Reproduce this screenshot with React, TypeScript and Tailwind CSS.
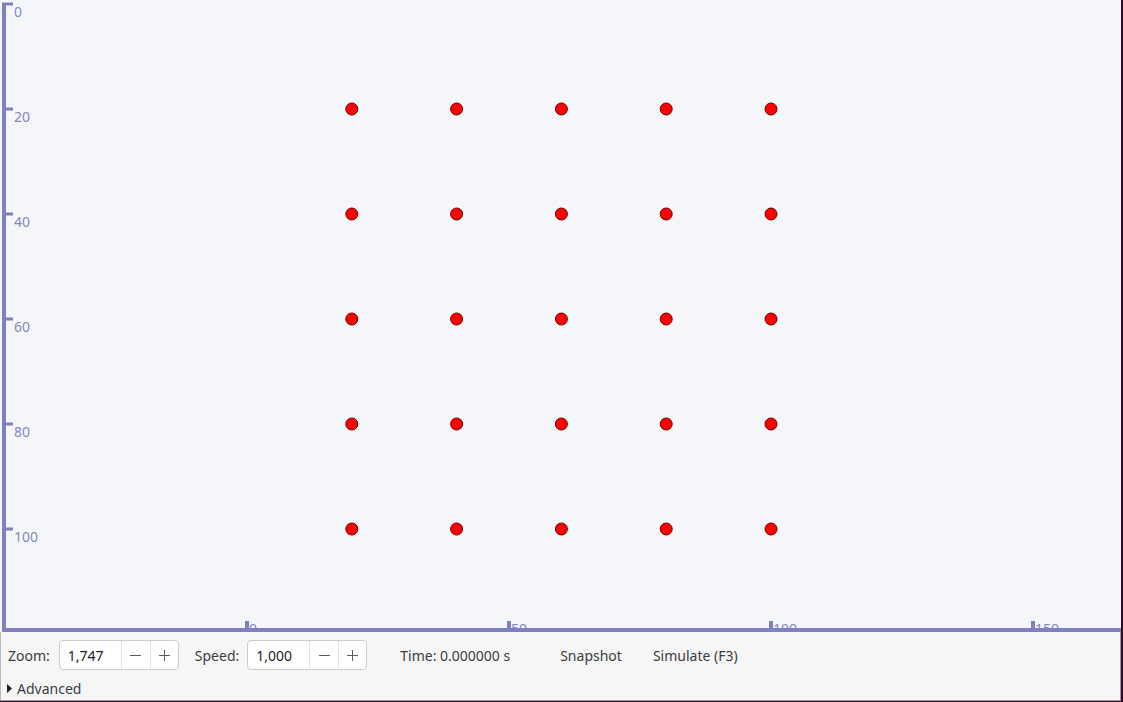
import React from "react";

const AXIS = "#8080c0";
const LABEL = "#8686c6";

const toX = (u: number) => 247 + u * 5.24;
const toY = (v: number) => 4 + v * 5.25;

const pts = [20, 40, 60, 80, 100];

function Plot() {
  return (
    <svg width={1121} height={632} className="block">
      <rect x={0} y={0} width={1121} height={632} fill="#f5f6f9" />
      {/* y axis */}
      <rect x={2} y={4} width={4} height={628} fill={AXIS} />
      {[0, 20, 40, 60, 80, 100].map((v) => (
        <g key={v}>
          <rect x={2} y={toY(v) - 1.5} width={11} height={3} fill={AXIS} />
          <text
            x={14}
            y={toY(v) + 12.5}
            fill={LABEL}
            fontSize={14}
            fontFamily="'Noto Sans', sans-serif"
          >
            {v}
          </text>
        </g>
      ))}
      {/* x axis ticks + labels, mostly hidden under the axis */}
      {[0, 50, 100, 150].map((u) => (
        <g key={u}>
          <rect x={toX(u) - 2} y={621} width={4} height={8} fill={AXIS} />
          <text
            x={toX(u) + 2}
            y={634}
            fill={LABEL}
            fontSize={14}
            fontFamily="'Noto Sans', sans-serif"
          >
            {u}
          </text>
        </g>
      ))}
      <rect x={2} y={628} width={1119} height={4} fill={AXIS} />
      {pts.map((v) =>
        pts.map((u) => (
          <circle
            key={`${u}-${v}`}
            cx={toX(u)}
            cy={toY(v)}
            r={6}
            fill="#ff0000"
            stroke="#6a0000"
            strokeWidth={1}
          />
        ))
      )}
    </svg>
  );
}

function SpinBox({ value }: { value: string }) {
  return (
    <div className="flex h-[30px] w-[120px] rounded-[4px] border border-[#cdcdcd] bg-white">
      <div className="flex w-[61px] items-center pl-[8px] text-[#1c1c1c]">{value}</div>
      <div className="flex w-[29px] items-center justify-center border-l border-[#e2e2e2]">
        <svg width={11} height={11}>
          <line x1={0} y1={5.5} x2={11} y2={5.5} stroke="#5a5a5a" strokeWidth={1} />
        </svg>
      </div>
      <div className="flex flex-1 items-center justify-center border-l border-[#e2e2e2]">
        <svg width={11} height={11}>
          <line x1={0} y1={5.5} x2={11} y2={5.5} stroke="#5a5a5a" strokeWidth={1} />
          <line x1={5.5} y1={0} x2={5.5} y2={11} stroke="#5a5a5a" strokeWidth={1} />
        </svg>
      </div>
    </div>
  );
}

export default function App() {
  return (
    <div
      className="flex h-[702px] w-[1123px] overflow-hidden bg-[#300a24] text-[14px] text-[#3c3c3c]"
      style={{ fontFamily: "'Noto Sans', 'DejaVu Sans', sans-serif" }}
    >
      <div className="flex h-[701px] w-[1121px] flex-col border-r border-b border-[#9c9c9c] bg-[#f6f6f7]">
        <Plot />
        <div className="flex flex-1 flex-col border-l border-[#b8b8b8]">
          <div className="flex items-center pt-[8px]">
            <span className="ml-[7px]">Zoom:</span>
            <div className="ml-[9px]">
              <SpinBox value="1,747" />
            </div>
            <span className="ml-[16px]">Speed:</span>
            <div className="ml-[8px]">
              <SpinBox value="1,000" />
            </div>
            <span className="ml-[33px]">Time: 0.000000 s</span>
            <span className="ml-[50px]">Snapshot</span>
            <span className="ml-[31px]">Simulate (F3)</span>
          </div>
          <div className="mt-[8px] flex items-center">
            <svg width={5} height={9} className="ml-[6px]">
              <polygon points="0,0 5,4.5 0,9" fill="#1e1e1e" />
            </svg>
            <span className="ml-[5px]">Advanced</span>
          </div>
        </div>
      </div>
    </div>
  );
}
